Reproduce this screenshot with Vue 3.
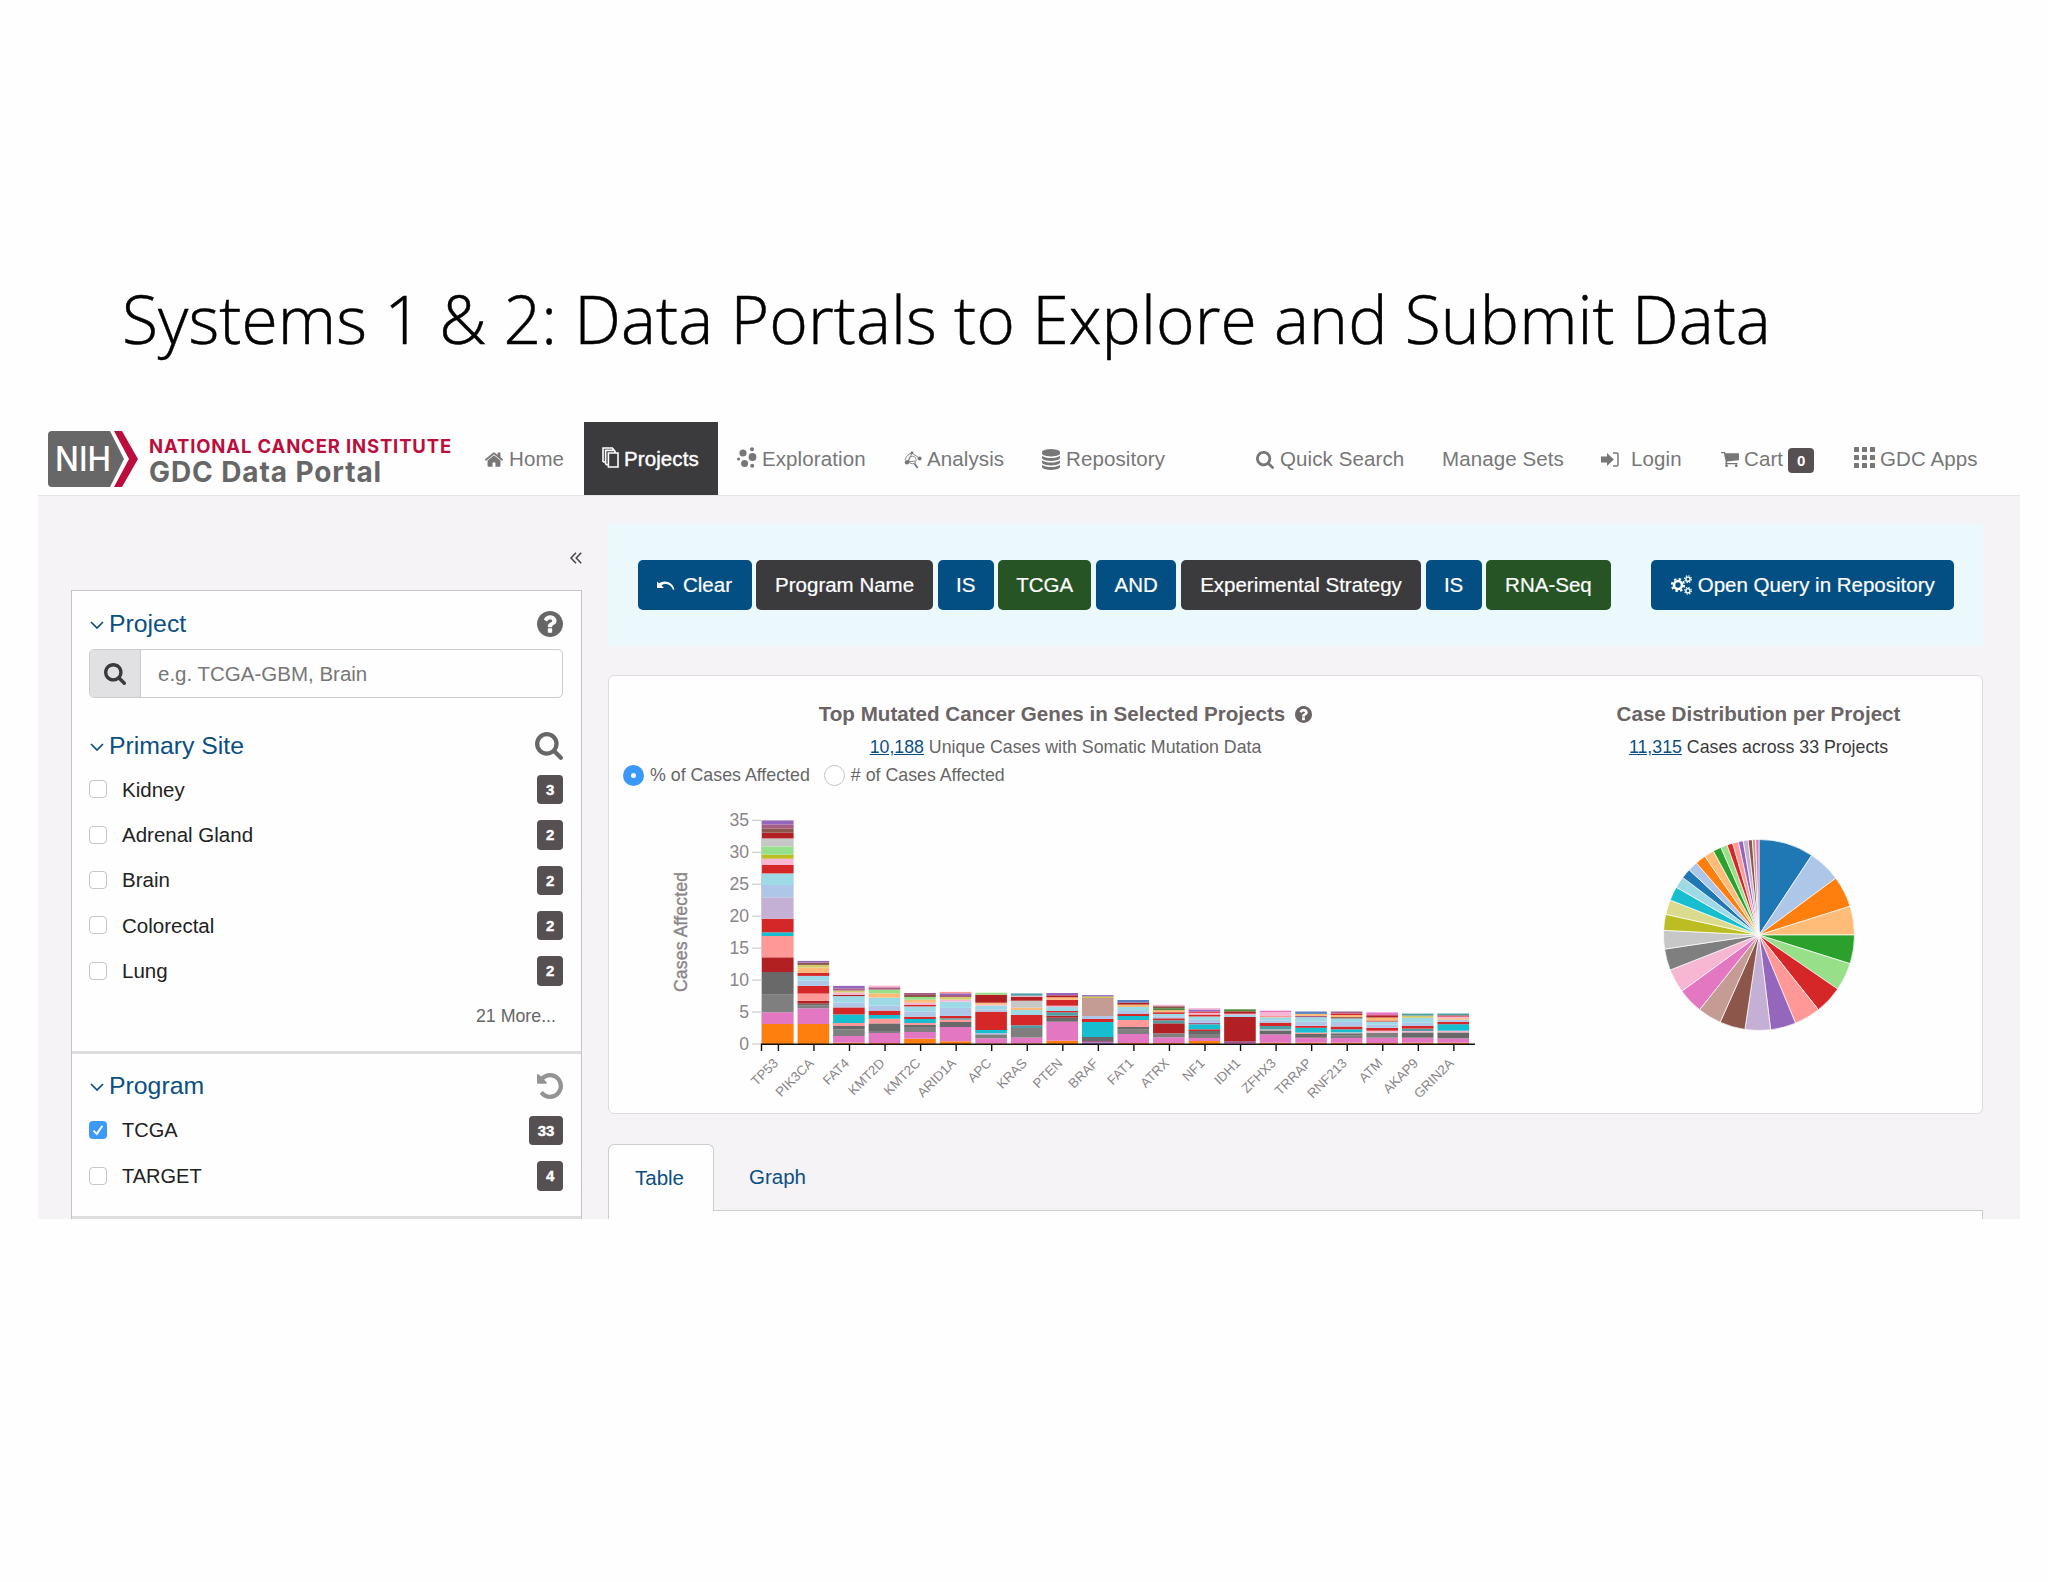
<template>
  <div class="slide">
    <h1 class="slide-title">Systems 1 &amp; 2: Data Portals to Explore and Submit Data</h1>

    <div class="portal">
      <header class="header">
        <div class="brand">
          <svg class="nih" viewBox="0 0 90 56">
            <path d="M4 0H62L76 28L62 56H4Q0 56 0 52V4Q0 0 4 0Z" fill="#676767" />
            <path d="M66 0H74L90 28L74 56H66L81 28Z" fill="#bb0e3d" />
            <text x="7" y="40" textLength="56" lengthAdjust="spacingAndGlyphs">NIH</text>
          </svg>
          <div class="brand-text">
            <span class="brand-top">NATIONAL CANCER INSTITUTE</span>
            <span class="brand-bottom">GDC Data Portal</span>
          </div>
        </div>
        <nav class="nav">
          <a class="nav-item home">
            <svg class="icon-home" viewBox="89 248 1614 1288"><path :d="icons.home" /></svg>
            <span>Home</span>
          </a>
          <a class="nav-item projects active">
            <svg class="icon-projects" viewBox="0 0 17 21">
              <path d="M1 15V1H11M3.6 17.4V3.4H13M1 15H3.6M3.6 17.6H6.4M11 1V3.4M13 3.4V6M6.4 6H16V20H6.4Z" />
            </svg>
            <span>Projects</span>
          </a>
          <a class="nav-item exploration">
            <svg class="icon-exploration" viewBox="0 0 20 21">
              <circle cx="6" cy="6" r="3.6" /><circle cx="15.5" cy="10" r="3.9" />
              <circle cx="7.6" cy="16.6" r="3.5" /><circle cx="15" cy="2.3" r="2" />
              <circle cx="1.6" cy="12" r="1.6" /><circle cx="15.2" cy="18.7" r="2" />
            </svg>
            <span>Exploration</span>
          </a>
          <a class="nav-item analysis">
            <svg class="icon-analysis" viewBox="0 0 18 18">
              <path d="M8 2Q3 3 1 9M8 2L4 11M8 2L15 7M4 11L11 10" fill="none" stroke="#777" stroke-width="0.9" />
              <circle cx="8" cy="1.8" r="1.4" /><circle cx="15.6" cy="7.4" r="2" />
              <circle cx="3" cy="11.2" r="2.2" />
              <circle cx="8.4" cy="9" r="3.8" fill="none" stroke="#777" stroke-width="0.8" />
              <path d="M10.4 12.4L13.6 17" stroke="#777" stroke-width="1.8" />
            </svg>
            <span>Analysis</span>
          </a>
          <a class="nav-item repository">
            <svg class="icon-repository" viewBox="128 0 1536 1792"><path :d="icons.database" /></svg>
            <span>Repository</span>
          </a>
          <a class="nav-item quick">
            <svg class="icon-quick" viewBox="64 128 1664 1664"><path :d="icons.search" /></svg>
            <span>Quick Search</span>
          </a>
          <a class="nav-item manage"><span>Manage Sets</span></a>
          <a class="nav-item login">
            <svg class="icon-login" viewBox="0 0 18 15">
              <path d="M0 4.5H6V1L12.8 7.5L6 14V10.5H0Z" />
              <path d="M12 1H15.5Q17 1 17 2.5V12.5Q17 14 15.5 14H12" fill="none" stroke="#777" stroke-width="1.5" />
            </svg>
            <span>Login</span>
          </a>
          <a class="nav-item cart">
            <svg class="icon-cart" viewBox="64 256 1664 1408"><path :d="icons.cart" /></svg>
            <span>Cart</span>
            <b class="cart-count">0</b>
          </a>
          <a class="nav-item apps">
            <svg class="icon-apps" viewBox="0 0 21 21">
              <template v-for="r in 3" :key="r">
                <rect v-for="c in 3" :key="c" :x="(c - 1) * 8" :y="(r - 1) * 8" width="5" height="5" rx="0.6" />
              </template>
            </svg>
            <span>GDC Apps</span>
          </a>
        </nav>
      </header>

      <div class="body">
        <aside class="sidebar">
          <div class="collapse">
            <svg viewBox="0 0 12 12"><path d="M6 0.8L1 6L6 11.2M11.2 0.8L6.2 6L11.2 11.2" /></svg>
          </div>
          <div class="facets">
            <section class="facet">
              <div class="facet-head">
                <svg class="chevron" viewBox="0 0 14 8"><path d="M1 1L7 7L13 1" /></svg>
                <h2>Project</h2>
                <svg class="head-icon" viewBox="128 128 1536 1536"><path :d="icons.question" /></svg>
              </div>
              <div class="search-box">
                <span class="addon">
                  <svg viewBox="64 128 1664 1664"><path :d="icons.search" /></svg>
                </span>
                <input type="text" placeholder="e.g. TCGA-GBM, Brain" />
              </div>
              <div class="facet-head site-head">
                <svg class="chevron" viewBox="0 0 14 8"><path d="M1 1L7 7L13 1" /></svg>
                <h2>Primary Site</h2>
                <svg class="head-icon large" viewBox="64 128 1664 1664"><path :d="icons.search" /></svg>
              </div>
              <ul class="terms">
                <li v-for="site in sites" :key="site.name">
                  <i class="check"></i>
                  <span>{{ site.name }}</span>
                  <b class="count">{{ site.count }}</b>
                </li>
              </ul>
              <div class="more">21 More...</div>
            </section>
            <section class="facet program">
              <div class="facet-head">
                <svg class="chevron" viewBox="0 0 14 8"><path d="M1 1L7 7L13 1" /></svg>
                <h2>Program</h2>
                <svg class="head-icon undo" viewBox="128 128 1536 1536"><path :d="icons.undo" /></svg>
              </div>
              <ul class="terms programs">
                <li v-for="item in programs" :key="item.name">
                  <i class="check" :class="{ checked: item.checked }">
                    <svg v-if="item.checked" viewBox="0 0 18 18"><path d="M4.5 9.6L7.8 13L13.4 4.8" /></svg>
                  </i>
                  <span>{{ item.name }}</span>
                  <b class="count">{{ item.count }}</b>
                </li>
              </ul>
            </section>
          </div>
        </aside>

        <main class="main">
          <div class="query">
            <button class="btn blue clear">
              <svg class="icon-clear" viewBox="0 0 18 9">
                <path d="M0 0.4L2 2.2Q6 -0.4 11 0.9Q16.5 2.8 17.4 8.8H16Q14.4 4 9.6 3Q6.5 2.6 4.4 4.4L7 7H0Z" />
              </svg>
              Clear
            </button>
            <button class="btn dark program-name">Program Name</button>
            <button class="btn blue is">IS</button>
            <button class="btn green tcga">TCGA</button>
            <button class="btn blue and">AND</button>
            <button class="btn dark strategy">Experimental Strategy</button>
            <button class="btn blue is">IS</button>
            <button class="btn green rna">RNA-Seq</button>
            <button class="btn blue open">
              <svg class="icon-gears" viewBox="0 0 21 20">
                <circle cx="7" cy="10" r="4" stroke-width="2.6" />
                <circle cx="7" cy="10" r="6.1" stroke-width="2" stroke-dasharray="2.4 2.39" />
                <circle cx="17" cy="4.2" r="2.1" stroke-width="1.4" />
                <circle cx="17" cy="4.2" r="3.4" stroke-width="1.1" stroke-dasharray="1.4 1.27" />
                <circle cx="17" cy="15.8" r="2.1" stroke-width="1.4" />
                <circle cx="17" cy="15.8" r="3.4" stroke-width="1.1" stroke-dasharray="1.4 1.27" />
              </svg>
              Open Query in Repository
            </button>
          </div>

          <div class="card">
            <div class="genes">
              <h3>
                <span>Top Mutated Cancer Genes in Selected Projects</span>
                <svg viewBox="128 128 1536 1536"><path :d="icons.question" /></svg>
              </h3>
              <p class="sub"><a>10,188</a> Unique Cases with Somatic Mutation Data</p>
              <div class="radios">
                <i class="radio on"></i><span class="percent">% of Cases Affected</span>
                <i class="radio"></i><span class="number"># of Cases Affected</span>
              </div>
              <svg class="chart" viewBox="0 0 911 300">
                <text class="axis-title" transform="translate(76.5 192) rotate(-90)" textLength="120">Cases Affected</text>
                <g v-for="tick in ticks" :key="tick.value">
                  <path :d="`M142 ${tick.y}H151`" stroke="#ccc" stroke-width="1.2" />
                  <text class="tick-label" x="139" :y="tick.y + 6">{{ tick.value }}</text>
                </g>
                <path d="M151.5 20V244" stroke="#ccc" stroke-width="1" />
                <g v-for="bar in bars" :key="bar.gene">
                  <rect
                    v-for="(seg, i) in bar.segments"
                    :key="i"
                    :x="bar.x"
                    :y="seg.y"
                    width="31.6"
                    :height="seg.height"
                    :fill="seg.color"
                  />
                  <path :d="`M${bar.x + 16.4} 244V251`" stroke="#111" stroke-width="1.4" />
                  <text class="gene-label" :transform="`translate(${bar.x + 17} 264) rotate(-45)`">{{ bar.gene }}</text>
                </g>
                <path d="M151.5 251V244.2H865" fill="none" stroke="#111" stroke-width="1.4" />
              </svg>
            </div>
            <div class="cases">
              <h3><span>Case Distribution per Project</span></h3>
              <p class="sub"><a>11,315</a> Cases across 33 Projects</p>
              <svg class="pie" viewBox="-96 -96 192 192">
                <path v-for="(slice, i) in slices" :key="i" :d="slice.d" :fill="slice.color" stroke="#fff" stroke-width="0.7" />
              </svg>
            </div>
          </div>

          <div class="tabs">
            <a class="tab current">Table</a>
            <a class="tab">Graph</a>
          </div>
          <div class="tab-panel"></div>
        </main>
      </div>
    </div>
  </div>
</template>

<script setup>
const sites = [
  { name: 'Kidney', count: 3 },
  { name: 'Adrenal Gland', count: 2 },
  { name: 'Brain', count: 2 },
  { name: 'Colorectal', count: 2 },
  { name: 'Lung', count: 2 }
]

const programs = [
  { name: 'TCGA', count: 33, checked: true },
  { name: 'TARGET', count: 4, checked: false }
]

const icons = {
  home: 'M1472 992v480q0 26-19 45t-45 19h-384v-384h-256v384h-384q-26 0-45-19t-19-45v-480q0-1 .5-3t.5-3l575-474 575 474q1 2 1 6zm223-69l-62 74q-8 9-21 11h-3q-13 0-21-7l-692-577-692 577q-12 8-24 7-13-2-21-11l-62-74q-8-10-7-23.5t11-21.5l719-599q32-26 76-26t76 26l244 204v-195q0-14 9-23t23-9h192q14 0 23 9t9 23v408l219 182q10 8 11 21.5t-7 23.5z',
  database: 'M896 768q237 0 443-43t325-127v170q0 69-103 128t-280 93.5-385 34.5-385-34.5-280-93.5-103-128v-170q119 84 325 127t443 43zm0 768q237 0 443-43t325-127v170q0 69-103 128t-280 93.5-385 34.5-385-34.5-280-93.5-103-128v-170q119 84 325 127t443 43zm0-384q237 0 443-43t325-127v170q0 69-103 128t-280 93.5-385 34.5-385-34.5-280-93.5-103-128v-170q119 84 325 127t443 43zm0-1152q208 0 385 34.5t280 93.5 103 128v128q0 69-103 128t-280 93.5-385 34.5-385-34.5-280-93.5-103-128v-128q0-69 103-128t280-93.5 385-34.5z',
  search: 'M1216 832q0-185-131.5-316.5t-316.5-131.5-316.5 131.5-131.5 316.5 131.5 316.5 316.5 131.5 316.5-131.5 131.5-316.5zm512 832q0 52-38 90t-90 38q-54 0-90-38l-343-342q-179 124-399 124-143 0-273.5-55.5t-225-150-150-225-55.5-273.5 55.5-273.5 150-225 225-150 273.5-55.5 273.5 55.5 225 150 150 225 55.5 273.5q0 220-124 399l343 343q37 37 37 90z',
  question: 'M1024 1376v-192q0-14-9-23t-23-9h-192q-14 0-23 9t-9 23v192q0 14 9 23t23 9h192q14 0 23-9t9-23zm256-672q0-88-55.5-163t-138.5-116-170-41q-243 0-371 213-15 24 8 42l132 100q7 6 19 6 16 0 25-12 53-68 86-92 34-24 86-24 48 0 85.5 26t37.5 59q0 38-20 61t-68 45q-63 28-115.5 86.5t-52.5 125.5v36q0 14 9 23t23 9h192q14 0 23-9t9-23q0-19 21.5-49.5t54.5-49.5q32-18 49-28.5t46-35 44.5-48 28-60.5 12.5-81zm384 192q0 209-103 385.5t-279.5 279.5-385.5 103-385.5-103-279.5-279.5-103-385.5 103-385.5 279.5-279.5 385.5-103 385.5 103 279.5 279.5 103 385.5z',
  cart: 'M704 1536q0 52-38 90t-90 38-90-38-38-90 38-90 90-38 90 38 38 90zm896 0q0 52-38 90t-90 38-90-38-38-90 38-90 90-38 90 38 38 90zm128-1088v512q0 24-16.5 42.5t-40.5 21.5l-1044 122q13 60 13 70 0 16-24 64h920q26 0 45 19t19 45-19 45-45 19h-1024q-26 0-45-19t-19-45q0-11 8-31.5t16-36 21.5-40 15.5-29.5l-177-823h-204q-26 0-45-19t-19-45 19-45 45-19h256q16 0 28.5 6.5t19.5 15.5 13 24.5 8 26 5.5 29.5 4.5 26h1201q26 0 45 19t19 45z',
  undo: 'M1664 896q0 156-61 298t-164 245-245 164-298 61q-172 0-327-72.5t-264-204.5q-7-10-6.5-22.5t8.5-20.5l137-138q10-9 25-9 16 2 23 12 73 95 179 147t225 52q104 0 198.5-40.5t163.5-109.5 109.5-163.5 40.5-198.5-40.5-198.5-109.5-163.5-163.5-109.5-198.5-40.5q-98 0-188 35.5t-160 101.5l137 138q31 30 14 69-17 40-59 40h-448q-26 0-45-19t-19-45v-448q0-42 40-59 39-17 69 14l130 129q107-101 244.5-156.5t284.5-55.5q156 0 298 61t245 164 164 245 61 298z'
}

const palette = {
  orange: '#ff7f0e',
  peach: '#ffbb78',
  pink: '#e377c2',
  rose: '#f7b6d2',
  gray: '#7f7f7f',
  slate: '#696969',
  silver: '#c7c7c7',
  brick: '#b22024',
  salmon: '#ff9896',
  red: '#d62728',
  teal: '#17becf',
  sea: '#4e9ea6',
  sky: '#9edae5',
  ice: '#aec7e8',
  lilac: '#c5b0d5',
  purple: '#9467bd',
  plum: '#a85c86',
  brown: '#8c564b',
  tan: '#c49c94',
  green: '#98df8a',
  olive: '#bcbd22',
  khaki: '#d2cb6b',
  blue: '#5a7fc0',
  forest: '#4c8c3a'
}

// each pair is a color name and the height of its segment, from the axis upwards
const genes = [
  ['TP53', 'orange 20 pink 11.7 gray 17.6 slate 22.7 brick 14.7 salmon 21.3 teal 3.7 red 13.6 lilac 21.4 ice 12.3 sky 11.6 red 8.4 rose 6.3 olive 4 green 8.3 silver 8 brick 5.7 brown 4.3 plum 4 purple 4'],
  ['PIK3CA', 'orange 20 pink 15.7 gray 2.7 slate 2 brick 2.7 salmon 7.3 red 7.7 ice 5.3 sky 4.7 red 3 peach 5.3 khaki 2.7 brown 2.3 purple 1.7'],
  ['FAT4', 'orange 1.3 pink 6.7 gray 6.7 slate 3.3 salmon 3 teal 8.6 red 7 ice 5 sky 6.3 brick 1.3 rose 2.3 khaki 2 plum 2 purple 2.6'],
  ['KMT2D', 'orange 1 pink 10 gray 2 slate 7.6 salmon 4.7 teal 3.7 red 4.4 ice 5 sky 8 peach 4.3 green 3.7 plum 2.3 rose 1.7'],
  ['KMT2C', 'orange 5.3 pink 6.7 gray 5 slate 2 salmon 2 teal 4 red 2.3 ice 5 sky 5.3 red 1.7 rose 2 peach 3 green 2.7 brown 2 plum 2'],
  ['ARID1A', 'orange 2.7 pink 14.3 slate 5 salmon 2.3 sea 1.4 red 2.4 ice 8 sky 6.3 rose 2 khaki 2.6 plum 2 purple 1.7 salmon 1.4'],
  ['APC', 'orange 0.7 pink 5 gray 4 ice 1.3 teal 3 red 18.3 ice 2.4 sky 3.6 rose 1 peach 2 brick 8 green 2'],
  ['KRAS', 'orange 0.7 pink 5.7 gray 9.6 sea 2.7 red 10.3 sky 5 peach 2.3 silver 7 brick 4 rose 1 sea 2.3'],
  ['PTEN', 'orange 3.3 pink 19 slate 4 brick 2 sea 3.4 red 1.3 sky 4 rose 1.3 red 6 peach 2.4 brick 2 purple 2.3'],
  ['BRAF', 'purple 1.7 plum 1.3 slate 4 teal 15 red 3 ice 3 tan 18.3 olive 1.3 purple 1.3'],
  ['FAT1', 'orange 1 pink 9 gray 4.3 slate 2.7 salmon 7 teal 4 red 2 ice 3 sky 4 peach 2.4 brick 2 blue 2.6'],
  ['ATRX', 'orange 1 pink 5.7 gray 4 brick 10 sea 3 red 2 ice 2 sky 2.4 red 1.7 peach 2 forest 2 brown 2 rose 1.4'],
  ['NF1', 'orange 3 pink 3 gray 4 slate 3 red 1.7 teal 5 plum 1.4 ice 3 sky 3.4 red 2 rose 1.7 red 1.3 purple 2 rose 1.4'],
  ['IDH1', 'pink 1 plum 2 brick 24 sky 2 rose 1.3 brick 2.4 forest 2'],
  ['ZFHX3', 'orange 1.3 pink 8.3 slate 4 silver 1 sea 3.4 red 3.3 ice 2.3 sky 3 salmon 1.4 rose 4 pink 1.3'],
  ['TRRAP', 'orange 1.3 pink 5 slate 3.7 salmon 1.4 teal 4.8 red 2 ice 4.3 sky 4.3 plum 1.3 peach 2 blue 2.4'],
  ['RNF213', 'orange 1.3 pink 4.7 gray 2.4 slate 2.3 silver 1 teal 3 red 2.8 ice 4.6 sky 3.4 brown 1.4 peach 2 red 1.6 plum 2'],
  ['ATM', 'orange 1 pink 5.3 gray 5 rose 2 red 2.8 ice 3.2 sky 3.2 red 1 peach 3 brick 2.3 pink 2.8'],
  ['AKAP9', 'orange 1.3 pink 5 slate 5.3 rose 1.4 sea 2.4 red 2.6 ice 3.2 sky 5 khaki 2.2 sea 2'],
  ['GRIN2A', 'orange 1.3 pink 4.3 slate 6 rose 1.7 teal 6.5 red 2.4 ice 2.2 peach 1.4 rose 1.6 red 1.2 sea 1.9']
]

const bars = genes.map(([gene, stack], index) => {
  const parts = stack.split(' ')
  const segments = []
  let y = 244
  for (let i = 0; i < parts.length; i += 2) {
    const height = Number(parts[i + 1])
    y -= height
    segments.push({ color: palette[parts[i]], y, height })
  }
  return { gene, x: 152 + index * 35.55, segments }
})

const ticks = [0, 5, 10, 15, 20, 25, 30, 35].map((value) => ({
  value,
  y: 244 - value * 6.39
}))

// clockwise end angle of each slice, in degrees
const sliceEnds = [
  33.5, 53.5, 72.5, 90, 107.5, 124.5, 141.5, 157.5, 173, 188.5, 204, 218.5, 234, 248.5, 261.5, 272.8,
  282.5, 291.5, 300, 307, 313, 319, 325.5, 331.5, 336.5, 340.5, 344, 347.5, 350.5, 353.5, 356, 358, 360
]
const sliceColors = [
  '#1f77b4', '#aec7e8', '#ff7f0e', '#ffbb78', '#2ca02c', '#98df8a', '#d62728', '#ff9896', '#9467bd', '#c5b0d5',
  '#8c564b', '#c49c94', '#e377c2', '#f7b6d2', '#7f7f7f', '#c7c7c7', '#bcbd22', '#dbdb8d', '#17becf', '#9edae5'
]

const point = (deg) => {
  const rad = (deg * Math.PI) / 180
  return `${(95.5 * Math.sin(rad)).toFixed(2)} ${(-95.5 * Math.cos(rad)).toFixed(2)}`
}

const slices = sliceEnds.map((end, i) => ({
  d: `M0 0L${point(i ? sliceEnds[i - 1] : 0)}A95.5 95.5 0 0 1 ${point(end)}Z`,
  color: sliceColors[i % 20]
}))
</script>

<style>
body {
  margin: 0;
  background: #fefefe;
}
</style>

<style scoped>
.slide {
  width: 2048px;
  height: 1582px;
  overflow: hidden;
  font-family: 'Liberation Sans', Arial, sans-serif;
  font-size: 20.5px;
  color: #222;
}

.slide * {
  box-sizing: border-box;
}

h1,
h2,
h3,
p,
ul {
  margin: 0;
  padding: 0;
  font-weight: normal;
}

svg {
  display: block;
  flex: none;
  fill: currentColor;
}

.slide-title {
  height: 422px;
  padding: 268px 0 0 122px;
  font: 300 66px/100px 'Open Sans', sans-serif;
  letter-spacing: 0.08px;
  color: #000;
  white-space: nowrap;
  -webkit-text-stroke: 0.5px #000;
}

.portal {
  width: 1982px;
  height: 797px;
  margin-left: 38px;
  overflow: hidden;
  background: #f5f3f6;
}

/* header */
.header {
  display: flex;
  height: 74px;
  background: #fefefe;
  border-bottom: 1px solid #e6e4e8;
}

.brand {
  display: flex;
  width: 434px;
  padding: 9px 0 0 10px;
}

.nih {
  width: 90px;
  height: 56px;
}

.nih text {
  font: 500 34px Inter, sans-serif;
  fill: #fff;
}

.brand-text {
  display: flex;
  flex-direction: column;
  margin-left: 11px;
  font-family: Inter, sans-serif;
  white-space: nowrap;
}

.brand-top {
  height: 27px;
  font-size: 18.5px;
  font-weight: 700;
  line-height: 30px;
  letter-spacing: 0.85px;
  color: #bb0e3d;
}

.brand-bottom {
  font-size: 28px;
  font-weight: 700;
  line-height: 28px;
  letter-spacing: 0.9px;
  color: #676767;
}

.nav {
  display: grid;
  grid-template-columns: 112px 134px 186px 138px 214px 186px 159px 120px 133px 144px;
  height: 73px;
}

.nav-item {
  display: flex;
  align-items: center;
  padding-top: 2px;
  color: #777;
  white-space: nowrap;
}

.nav-item span {
  margin-top: -2px;
  letter-spacing: 0.1px;
}

.nav-item.active {
  padding-left: 18px;
  background: #3b3a3c;
  color: #fff;
}

.projects span {
  -webkit-text-stroke: 0.4px #fff;
}

.nav-item.home {
  padding-left: 13px;
}

.nav-item.exploration {
  padding-left: 19px;
}

.icon-home {
  width: 18px;
  height: 15px;
  margin-right: 6px;
}

.icon-projects {
  width: 17px;
  height: 21px;
  margin: 0 5px 4px 0;
  fill: none;
  stroke: currentColor;
  stroke-width: 1.6;
}

.icon-exploration {
  width: 20px;
  height: 21px;
  margin: 0 5px 5px 0;
}

.icon-analysis {
  width: 18px;
  height: 18px;
  margin-right: 5px;
}

.icon-repository {
  width: 18px;
  height: 21px;
  margin-right: 6px;
}

.icon-quick {
  width: 18px;
  height: 18px;
  margin-right: 6px;
}

.icon-login {
  width: 18px;
  height: 15px;
  margin-right: 12px;
}

.icon-cart {
  width: 18px;
  height: 17px;
  margin-right: 5px;
}

.icon-apps {
  width: 21px;
  height: 21px;
  margin: 0 5px 5px 0;
}

.cart-count {
  width: 26px;
  height: 25px;
  margin: 1px 0 0 5px;
  border-radius: 4px;
  background: #575052;
  color: #fff;
  font-size: 15px;
  line-height: 25px;
  text-align: center;
}

/* sidebar */
.body {
  display: flex;
}

.sidebar {
  width: 511px;
  margin-left: 33px;
}

.collapse {
  display: flex;
  justify-content: flex-end;
  height: 94px;
  padding-top: 56px;
}

.collapse svg {
  width: 12px;
  height: 12px;
  fill: none;
  stroke: #444;
  stroke-width: 1.5;
}

.facets {
  height: 640px;
  border: 1px solid #c4c3c6;
  border-bottom: 0;
  background: #fefefe;
}

.facet {
  height: 463px;
  padding: 17px 18px 0 17px;
  border-bottom: 3px solid #dedcdf;
}

.facet.program {
  height: 165px;
  padding-top: 16px;
}

.facet-head {
  display: flex;
  align-items: center;
  height: 32px;
  color: #0b4f82;
}

.facet-head h2 {
  flex: 1;
  font-size: 24.8px;
  line-height: 30px;
}

.site-head {
  margin-top: 32px;
}

.chevron {
  width: 14px;
  height: 8px;
  margin: 2px 5px 0 1px;
  fill: none;
  stroke: currentColor;
  stroke-width: 1.7;
}

.head-icon {
  width: 26px;
  height: 26px;
  color: #666;
}

.head-icon.large {
  width: 28px;
  height: 28px;
}

.head-icon.undo {
  color: #939393;
}

.search-box {
  display: flex;
  height: 49px;
  margin-top: 9px;
  border: 1.5px solid #ccc;
  border-radius: 5px;
  overflow: hidden;
}

.addon {
  display: flex;
  align-items: center;
  justify-content: center;
  width: 51px;
  background: #e1e1e3;
  border-right: 1px solid #ccc;
  color: #3a3a3a;
}

.addon svg {
  width: 22px;
  height: 22px;
}

.search-box input {
  flex: 1;
  padding: 1px 0 0 17px;
  border: 0;
  outline: 0;
  background: none;
  font: 20.5px 'Liberation Sans', Arial, sans-serif;
}

.search-box input::placeholder {
  color: #777;
}

.terms {
  margin-top: 5px;
  list-style: none;
}

.terms li {
  display: flex;
  align-items: center;
  height: 45.35px;
}

.terms span {
  flex: 1;
}

.programs {
  margin-top: 6px;
}

.programs span {
  font-size: 20px;
}

.check {
  width: 18px;
  height: 18px;
  margin: 0 15px 1px 0;
  border: 1.5px solid #c6c6c8;
  border-radius: 4px;
  background: #fff;
}

.check.checked {
  border: 0;
  background: #3b99fc;
}

.check path {
  fill: none;
  stroke: #fff;
  stroke-width: 2;
}

.count {
  padding: 0 8.7px;
  border-radius: 4px;
  background: #575052;
  color: #fff;
  font-size: 15px;
  line-height: 29.5px;
  -webkit-text-stroke: 0.4px #fff;
}

.more {
  padding: 12px 7px 0 0;
  font-size: 17.8px;
  line-height: 20px;
  text-align: right;
  color: #666;
}

/* query bar */
.main {
  width: 1375px;
  margin-left: 26px;
}

.query {
  display: flex;
  align-items: center;
  height: 122px;
  margin-top: 28px;
  padding: 0 0 1px 29.5px;
  background: #ebf8fc;
}

.btn {
  display: flex;
  flex: none;
  align-items: center;
  justify-content: center;
  height: 50px;
  margin: 0 4.6px 0 0;
  padding: 1px 0 0;
  border: 0;
  border-radius: 5px;
  color: #fff;
  font: 20.5px 'Liberation Sans', Arial, sans-serif;
  white-space: nowrap;
  -webkit-text-stroke: 0.2px #fff;
}

.blue {
  background: #034f84;
}

.dark {
  background: #3b3a3c;
}

.green {
  background: #265424;
}

.clear {
  width: 114px;
}

.icon-clear {
  width: 18px;
  height: 9px;
  margin-right: 8px;
}

.program-name {
  width: 177px;
}

.is {
  width: 56px;
}

.tcga {
  width: 93px;
}

.and {
  width: 80.5px;
}

.strategy {
  width: 240px;
}

.rna {
  width: 124.5px;
}

.open {
  width: 303px;
  margin-left: 36px;
}

.icon-gears {
  width: 21px;
  height: 20px;
  margin-right: 6px;
  fill: none;
  stroke: currentColor;
}

/* charts */
.card {
  display: flex;
  height: 439px;
  margin-top: 29px;
  padding-left: 1px;
  border: 1.5px solid #dddbdf;
  border-radius: 6px;
  background: #fefefe;
}

.genes {
  width: 911px;
}

.cases {
  width: 448px;
  margin-left: 14px;
}

.card h3 {
  display: flex;
  justify-content: center;
  align-items: center;
  height: 24px;
  margin-top: 26px;
  font-size: 20.6px;
  font-weight: bold;
  color: #6a6465;
}

.card h3 svg {
  width: 17px;
  height: 17px;
  margin-left: 10px;
}

.sub {
  margin-top: 11px;
  font-size: 17.75px;
  line-height: 21px;
  text-align: center;
  color: #666;
}

.cases .sub {
  color: #3a3a3c;
}

.sub a {
  color: #0b4f82;
  text-decoration: underline;
}

.radios {
  display: flex;
  align-items: center;
  height: 22px;
  margin: 6px 0 0 13px;
  font-size: 17.8px;
  color: #666;
}

.radio {
  width: 21px;
  height: 21px;
  margin-right: 6px;
  border: 1.5px solid #c3c3c6;
  border-radius: 50%;
  background: #fff;
}

.radio.on {
  border: 8px solid #3b99fc;
}

.percent {
  margin-right: 14px;
}

.chart {
  width: 911px;
  height: 300px;
  margin-top: 14px;
}

.axis-title {
  font-size: 17.6px;
  fill: #8a8588;
  stroke: #8a8588;
  stroke-width: 0.4;
}

.tick-label {
  font-size: 17.6px;
  text-anchor: end;
  fill: #8a8588;
}

.gene-label {
  font-size: 13.3px;
  text-anchor: end;
  fill: #8a8588;
}

.pie {
  width: 192px;
  height: 192px;
  margin: 81px 0 0 128px;
}

/* tabs */
.tabs {
  display: flex;
  height: 67px;
  margin-top: 30px;
}

.tab {
  padding: 0 26px;
  border-bottom: 1.5px solid #cdcccf;
  color: #0b4f82;
  line-height: 66px;
}

.tab:last-child {
  flex: 1;
  padding-left: 35px;
}

.tab.current {
  width: 106px;
  border: 1.5px solid #cdcccf;
  border-bottom: 0;
  border-radius: 6px 6px 0 0;
  background: #fefefe;
}

.tab-panel {
  height: 12px;
  border: 1.5px solid #cdcccf;
  border-width: 0 1.5px;
  background: #fefefe;
}
</style>
